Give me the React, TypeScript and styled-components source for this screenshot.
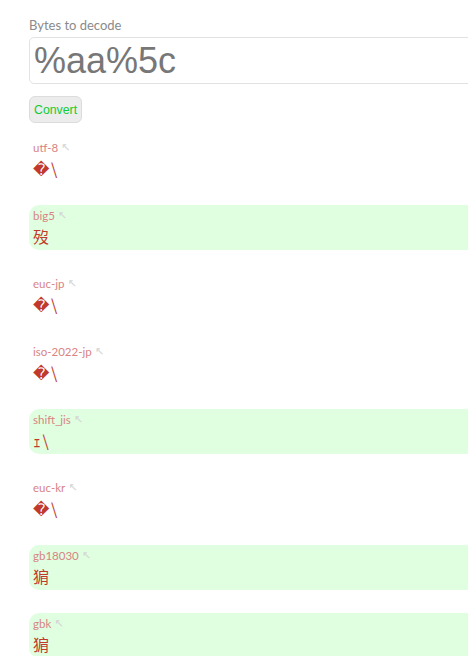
import React from "react";
import styled, { createGlobalStyle } from "styled-components";

const Global = createGlobalStyle`
  html, body {
    margin: 0;
    padding: 0;
    background: #ffffff;
    overflow: hidden;
  }
`;

const Page = styled.main`
  width: 520px;
  padding: 17px 0 0 29px;
  box-sizing: border-box;
  font-family: Lato, "Open Sans", sans-serif;
`;

const FieldLabel = styled.label`
  display: block;
  font-size: 13px;
  line-height: 16px;
  color: #8a8a8a;
`;

const BytesInput = styled.input`
  display: block;
  box-sizing: border-box;
  width: 100%;
  height: 47px;
  margin-top: 4px;
  padding: 0 4px;
  border: 1px solid #e2e2e2;
  border-radius: 5px;
  font-family: "Liberation Sans", Arial, sans-serif;
  font-size: 36px;
  color: #777777;
  background: #fff;
  outline: none;
`;

const ConvertButton = styled.button`
  display: block;
  margin-top: 12px;
  height: 27px;
  padding: 0 4px;
  border: 1px solid #dcdcdc;
  border-radius: 6px;
  background: #ececec;
  color: #11cc33;
  font-family: "Liberation Sans", Arial, sans-serif;
  font-size: 12.3px;
`;

const Results = styled.div`
  margin-top: 14px;
  display: flex;
  flex-direction: column;
  gap: 23px;
`;

const Row = styled.section<{ $match: boolean }>`
  box-sizing: border-box;
  height: 45px;
  padding: 4px 4px 0 4px;
  border-radius: 10px;
  background: ${(p) => (p.$match ? "#e0ffe0" : "transparent")};
`;

const Name = styled.div`
  display: flex;
  align-items: center;
  gap: 3px;
  font-size: 11.5px;
  line-height: 14px;
  color: #d88484;
`;

const Arrow = styled.span`
  color: #d4d4d4;
  font-family: "DejaVu Sans", sans-serif;
  font-size: 11px;
`;

const Decoded = styled.div`
  margin-top: 1px;
  font-family: "Noto Sans CJK SC", "DejaVu Sans", sans-serif;
  font-size: 16px;
  line-height: 24px;
  letter-spacing: 1.5px;
  color: #c0392b;
`;

const BYTES = "%aa%5c";
const ENCODINGS = [
  "utf-8",
  "big5",
  "euc-jp",
  "iso-2022-jp",
  "shift_jis",
  "euc-kr",
  "gb18030",
  "gbk",
];

function parseBytes(s: string): Uint8Array {
  const out: number[] = [];
  for (let i = 0; i < s.length; i++) {
    if (s[i] === "%") {
      out.push(parseInt(s.slice(i + 1, i + 3), 16));
      i += 2;
    } else {
      out.push(s.charCodeAt(i));
    }
  }
  return new Uint8Array(out);
}

function decode(enc: string, bytes: Uint8Array): string {
  try {
    return new TextDecoder(enc).decode(bytes);
  } catch {
    return "";
  }
}

export default function App() {
  const bytes = parseBytes(BYTES);
  return (
    <Page>
      <Global />
      <FieldLabel>Bytes to decode</FieldLabel>
      <BytesInput defaultValue={BYTES} />
      <ConvertButton>Convert</ConvertButton>
      <Results>
        {ENCODINGS.map((enc) => {
          const text = decode(enc, bytes);
          const match = !text.includes("\uFFFD");
          return (
            <Row key={enc} $match={match}>
              <Name>
                {enc}
                <Arrow>↖</Arrow>
              </Name>
              <Decoded>{text}</Decoded>
            </Row>
          );
        })}
      </Results>
    </Page>
  );
}
